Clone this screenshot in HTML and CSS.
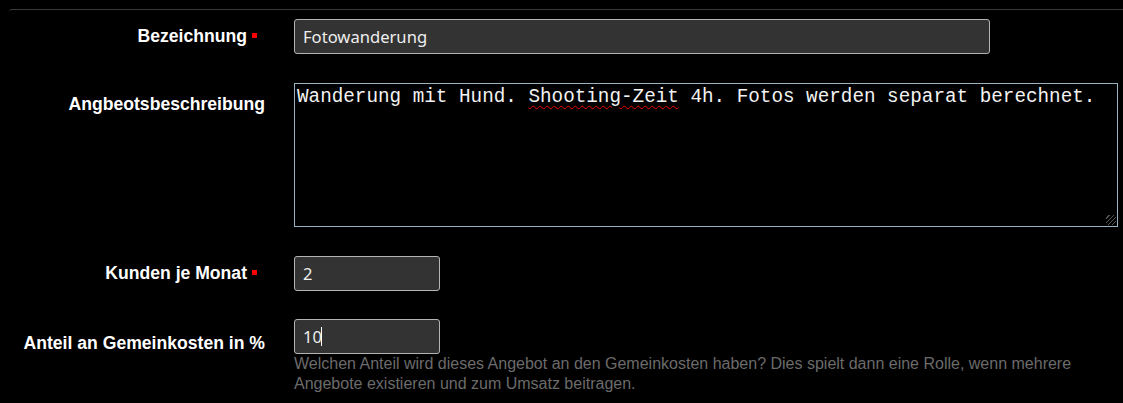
FILE: index.html
```html
<!DOCTYPE html>
<html lang="de">
<head>
    <meta charset="UTF-8">
    <meta name="viewport" content="width=device-width, initial-scale=1.0">
    <title>Angebot bearbeiten</title>
    <link rel="stylesheet" href="styles.css">
</head>
<body>
    <form class="offer-form">
        <div class="form-row">
            <label class="form-label required" for="name">Bezeichnung</label>
            <div class="form-field">
                <input class="text-input wide" type="text" id="name" value="Fotowanderung">
            </div>
        </div>

        <div class="form-row">
            <label class="form-label label-area" for="desc">Angbeotsbeschreibung</label>
            <div class="form-field">
                <div class="textarea" id="desc" role="textbox">Wanderung mit Hund. <span class="misspelled">Shooting-Zeit</span> 4h. Fotos werden separat berechnet.</div>
            </div>
        </div>

        <div class="form-row tight">
            <label class="form-label required" for="customers">Kunden je Monat</label>
            <div class="form-field">
                <input class="text-input short" type="text" id="customers" value="2">
            </div>
        </div>

        <div class="form-row">
            <label class="form-label label-low" for="share">Anteil an Gemeinkosten in %</label>
            <div class="form-field">
                <div class="input-wrap">
                    <input class="text-input short" type="text" id="share" value="10">
                    <span class="caret"></span>
                </div>
                <p class="hint">Welchen Anteil wird dieses Angebot an den Gemeinkosten haben? Dies spielt dann eine Rolle, wenn mehrere Angebote existieren und zum Umsatz beitragen.</p>
            </div>
        </div>
    </form>
</body>
</html>
```

FILE: styles.css
```css
body {
    margin: 0;
    padding: 9px 0 0 9px;
    background-color: #000;
    color: #fff;
    font-family: "Liberation Sans", Arial, sans-serif;
}
.offer-form {
    border-top: 1px solid #3a3a3a;
    border-top-left-radius: 3px;
    padding-top: 9px;
}
.form-row {
    display: grid;
    grid-template-columns: 256px 824px;
    column-gap: 29px;
    margin-bottom: 29px;
}
.form-row.tight {
    margin-bottom: 28px;
}
.form-row:last-child {
    margin-bottom: 0;
}
.form-label {
    text-align: right;
    font-weight: bold;
    font-size: 17.6px;
    padding-top: 7px;
}
.form-label.required {
    margin-right: 18px;
}
.form-label.required::after {
    content: "";
    display: inline-block;
    width: 5px;
    height: 5px;
    background-color: #f00;
    margin-left: 5px;
    margin-right: -10px;
    vertical-align: 4px;
}
.label-area {
    padding-top: 11px;
}
.label-low {
    padding-top: 14px;
}
.text-input {
    display: block;
    box-sizing: border-box;
    height: 35px;
    padding: 0 8px;
    background-color: #333;
    color: #eee;
    border: 1px solid #b4b4b4;
    border-radius: 3px;
    font-family: "Noto Sans", "Open Sans", sans-serif;
    font-size: 16.6px;
}
.text-input.wide {
    width: 696px;
}
.text-input.short {
    width: 146px;
}
.textarea {
    box-sizing: border-box;
    width: 824px;
    height: 144px;
    padding: 1px 2px;
    border: 1px solid #9ab3c3;
    background-color: #000;
    color: #f2f2f2;
    font-family: "Liberation Mono", "Courier New", monospace;
    font-size: 19.3px;
    line-height: 24px;
    background-image: repeating-linear-gradient(135deg, transparent 0, transparent 2px, #555 2px, #555 3px);
    background-size: 10px 10px;
    background-position: right 1px bottom 1px;
    background-repeat: no-repeat;
}
.misspelled {
    text-decoration: underline wavy #e00;
    text-decoration-thickness: 1px;
    text-underline-offset: 3px;
}
.input-wrap {
    position: relative;
    width: 146px;
}
.caret {
    position: absolute;
    left: 27px;
    top: 8px;
    width: 1px;
    height: 19px;
    background-color: #fff;
}
.hint {
    margin: 0;
    font-size: 16px;
    line-height: 20px;
    color: #6b6b6b;
}
```
